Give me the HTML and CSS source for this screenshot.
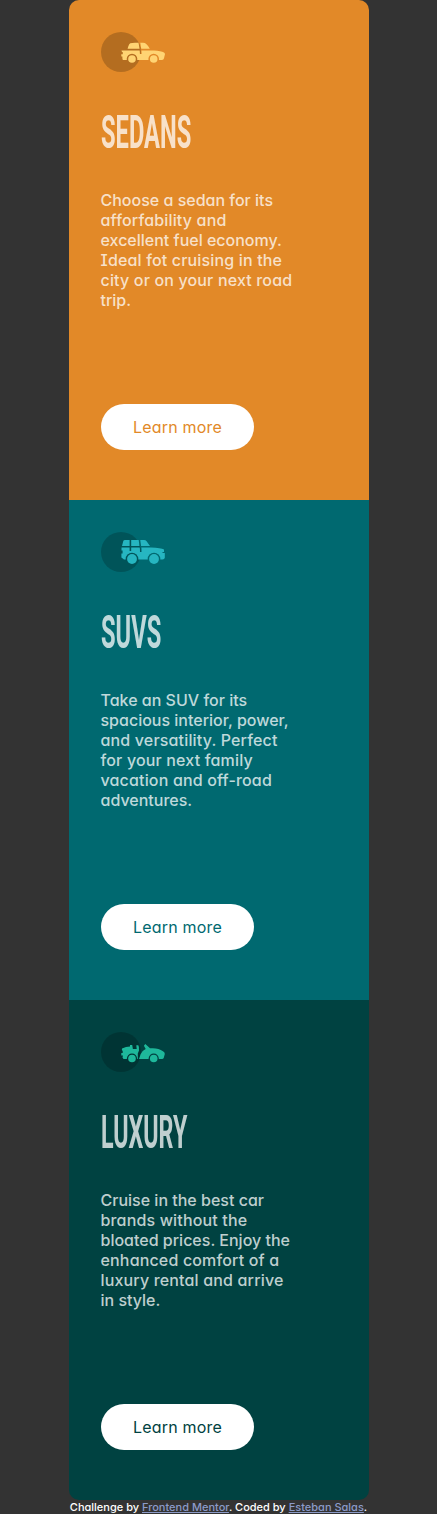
FILE: index.html
```
<!DOCTYPE html>
<html lang="en">
<head>
<meta charset="utf-8">
<meta name="viewport" content="width=device-width, initial-scale=1">
<title>Car rental cards</title>
<link rel="stylesheet" href="styles.css">
</head>
<body>
<main class="cards">
  <section class="card sedans">
    <svg class="icon" viewBox="0 0 64 40" aria-hidden="true">
      <defs><mask id="sedan-gaps"><rect width="64" height="40" fill="#fff"/><circle cx="31" cy="27" r="5.3"/><circle cx="52.7" cy="27" r="5.3"/><path d="M38.2 10C39 14 39.8 17 39.8 22" fill="none" stroke="#000" stroke-width="1.7"/></mask></defs>
      <circle cx="20" cy="20" r="20" fill="#000" fill-opacity=".2"/>
      <g fill="#ffd473">
        <path mask="url(#sedan-gaps)" d="M26.6 16.8C27.4 14 28 11.8 29.3 11.3Q31 10.8 34 10.8H42Q44 10.8 45 11.8Q47.5 14 48.8 16.8ZM20.5 18.4H53Q60 18.6 63 20.5Q64.2 21.4 63.9 22.5L63 26.3Q62.7 28 61 28H22.5Q21.4 28 21.4 26.5V24.5H20.3V22.2H21.8V20.2Q20.6 19.8 20.5 18.4Z"/>
        <circle cx="31" cy="27" r="3.8"/><circle cx="52.7" cy="27" r="3.8"/>
      </g>
    </svg>
    <h1>Sedans</h1>
    <p>Choose a sedan for its<br><span class="wide">afforfability and</span><br>excellent fuel economy.<br><span class="wide">Ideal fot cruising in the</span><br><span class="wide">city or on your next road</span><br>trip.</p>
    <a class="button">Learn more</a>
  </section>
  <section class="card suvs">
    <svg class="icon" viewBox="0 0 64 40" aria-hidden="true">
      <defs><mask id="suv-gaps"><rect width="64" height="40" fill="#fff"/><circle cx="31" cy="27" r="6.3"/><circle cx="53" cy="27" r="6.3"/><path d="M38.4 7C38.7 12 40 15 39.8 20M29.4 7V19" fill="none" stroke="#000" stroke-width="1.6"/></mask></defs>
      <circle cx="20" cy="20" r="20" fill="#000" fill-opacity=".2"/>
      <g fill="#26b6c1">
        <path mask="url(#suv-gaps)" d="M21 14L22.3 9Q22.6 8 24 8H43Q44.7 8 45.6 9.2L49 14ZM20.5 15.6H50Q60 16.2 63 17.4V20H61.5V21H63.8V25.7Q63.5 27.5 61.5 27.5H23L20.4 25.5V21.5H21.6V18.5H20.5Z"/>
        <circle cx="31" cy="27" r="4.9"/><circle cx="53" cy="27" r="4.9"/>
      </g>
    </svg>
    <h1>SUVs</h1>
    <p>Take an SUV for its<br>spacious interior, power,<br><span class="wide">and versatility. Perfect</span><br><span class="wide">for your next family</span><br><span class="wide">vacation and off-road</span><br>adventures.</p>
    <a class="button">Learn more</a>
  </section>
  <section class="card luxury">
    <svg class="icon" viewBox="0 0 64 40" aria-hidden="true">
      <defs><mask id="luxury-gaps"><rect width="64" height="40" fill="#fff"/><circle cx="31" cy="26.5" r="5.1"/><circle cx="52.7" cy="26.5" r="5.1"/></mask></defs>
      <circle cx="20" cy="20" r="20" fill="#000" fill-opacity=".2"/>
      <g fill="#1eb89b">
        <path mask="url(#luxury-gaps)" d="M21 16.5Q25 14.7 29 14.6V13H31.2L31.9 17H35.7L35.3 13.3H37.3Q38.4 15 38 18.5L36.8 21.5V27H22.5L21.5 25.5L22 23.5H20.3V21H21.7V19Q20.4 18 21 16.5ZM38 27L39.6 22.2Q41 18.6 44.7 17L42.9 13.7L44.3 12L49 16.3Q57 15.5 62 19.2Q64 20.5 63.8 22L62.8 25.7Q62.3 27 61 27Z"/>
        <circle cx="31" cy="26.5" r="3.8"/><circle cx="52.7" cy="26.5" r="3.8"/>
      </g>
    </svg>
    <h1>Luxury</h1>
    <p>Cruise in the best car<br><span class="wide">brands without the</span><br>bloated prices. Enjoy the<br><span class="wide">enhanced comfort of a</span><br><span class="wide">luxury rental and arrive</span><br>in style.</p>
    <a class="button">Learn more</a>
  </section>
</main>
<footer class="credits">Challenge by <a>Frontend Mentor</a>. Coded by <a>Esteban Salas</a>.</footer>
</body>
</html>
```
FILE: styles.css
```
* { box-sizing: border-box; margin: 0; }
body {
  background: #333;
  font-family: Inter, "Open Sans", sans-serif;
  font-feature-settings: "cv11", "cv08";
}
.cards {
  width: 300px;
  margin: 0 auto 0 69px;
  border-radius: 10px;
  overflow: hidden;
}
.card {
  height: 500px;
  padding: 32px 32px 50px;
  display: flex;
  flex-direction: column;
  align-items: flex-start;
}
.sedans { background: #e28928; color: #e28928; }
.suvs { background: #006970; color: #006970; }
.luxury { background: #004241; color: #004241; }
.icon { width: 64px; height: 40px; flex: none; display: block; }
h1 {
  margin-top: 36px;
  height: 48px;
  font: 700 46px/48px Roboto, sans-serif;
  text-transform: uppercase;
  color: rgba(255, 255, 255, .75);
  transform: scaleX(.515);
  transform-origin: 0 50%;
}
.luxury h1 { transform: scaleX(.505); }
p {
  margin-top: 34px;
  margin-left: -.5px;
  font-size: 16px;
  font-weight: 450;
  line-height: 20px;
  letter-spacing: 0;
  white-space: nowrap;
  color: rgba(255, 255, 255, .75);
}
.wide { letter-spacing: .16px; }
.button {
  margin-top: auto;
  width: 153px;
  height: 46px;
  border-radius: 23px;
  background: #fff;
  font-size: 16px;
  letter-spacing: .2px;
  line-height: 46px;
  text-align: center;
}
.credits {
  height: 14px;
  font-size: 11px;
  font-weight: 500;
  line-height: 14px;
  text-align: center;
  white-space: nowrap;
  color: #fff;
}
.credits a { color: #8c9bc9; text-decoration: underline; }
```
